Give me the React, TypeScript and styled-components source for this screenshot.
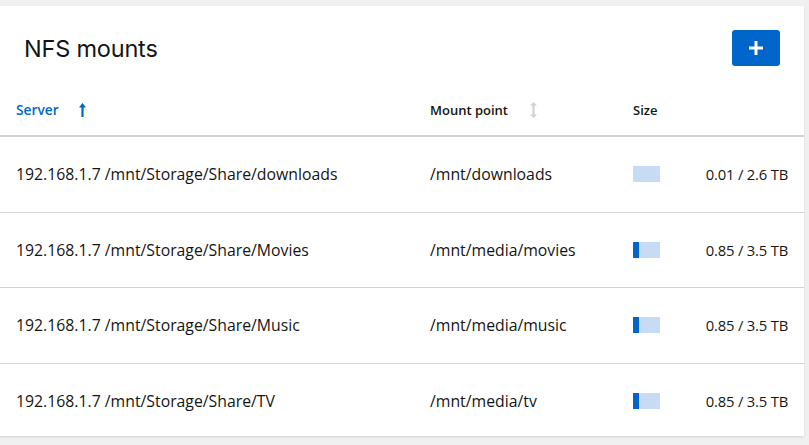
import React from 'react';
import styled, { createGlobalStyle } from 'styled-components';

const GlobalStyle = createGlobalStyle`
  html, body {
    margin: 0;
    padding: 0;
    background: #f0f0f0;
  }
  body {
    font-family: "Open Sans", "Liberation Sans", sans-serif;
    color: #151515;
  }
`;

const Page = styled.div`
  width: 809px;
  height: 445px;
  padding-top: 6px;
  box-sizing: border-box;
  overflow: hidden;
`;

const Card = styled.div`
  width: 804px;
  height: 430px;
  background: #fff;
  box-shadow: 0 1px 2px rgba(3, 3, 3, 0.12);
  overflow: hidden;
`;

const CardHeader = styled.div`
  display: flex;
  align-items: center;
  justify-content: space-between;
  padding: 24px 24px 18px 24px;
  height: 36px;
`;

const Title = styled.h2`
  margin: 0;
  font-family: "Inter", "Open Sans", sans-serif;
  font-size: 23.5px;
  font-weight: 400;
  letter-spacing: -0.2px;
  color: #151515;
`;

const AddButton = styled.button`
  width: 48px;
  height: 36px;
  border: none;
  border-radius: 3px;
  background: #0066cc;
  display: flex;
  align-items: center;
  justify-content: center;
  padding: 0;
  cursor: pointer;
`;

const Row = styled.div<{ $head?: boolean }>`
  display: grid;
  grid-template-columns: 414px 203px 1fr auto;
  align-items: center;
  padding: 0 16px;
  height: ${p => (p.$head ? '51px' : '74.5px')};
  border-bottom: ${p => (p.$head ? '1px solid #d2d2d2' : 'none')};
  & + & {
    border-top: 1px solid #d2d2d2;
  }
`;

const HeadCell = styled.div<{ $active?: boolean }>`
  display: flex;
  align-items: center;
  font-size: ${p => (p.$active ? '13.8px' : '13px')};
  font-weight: 600;
  color: ${p => (p.$active ? '#0066cc' : '#151515')};
`;

const SortIcon = styled.span<{ $offset: number }>`
  display: inline-flex;
  margin-left: ${p => p.$offset}px;
`;

const Cell = styled.div`
  font-size: 15.8px;
  font-weight: 400;
  color: #151515;
  white-space: nowrap;
`;

const SizeCell = styled(Cell)`
  text-align: right;
  font-size: 14.8px;
  letter-spacing: -0.2px;
`;

const Bar = styled.div`
  width: 27px;
  height: 16px;
  background: #c7dcf4;
`;

const BarFill = styled.div`
  height: 100%;
  background: #0066cc;
`;

const PlusIcon = () => (
  <svg width="14" height="14" viewBox="0 0 14 14">
    <rect x="5.5" y="0" width="3" height="14" fill="#fff" />
    <rect x="0" y="5.5" width="14" height="3" fill="#fff" />
  </svg>
);

const ArrowUp = () => (
  <svg width="7" height="14" viewBox="0 0 7 14">
    <path d="M2.4 4.5 V14 H4.6 V4.5 H7 L3.5 0 L0 4.5 Z" fill="#0066cc" />
  </svg>
);

const ArrowsVertical = () => (
  <svg width="7" height="16" viewBox="0 0 7 16">
    <path
      d="M3.5 0 L7 3.6 H4.6 V12.4 H7 L3.5 16 L0 12.4 H2.4 V3.6 H0 Z"
      fill="#d2d2d2"
    />
  </svg>
);

const BAR_WIDTH = 27;

const mounts = [
  { server: '192.168.1.7 /mnt/Storage/Share/downloads', point: '/mnt/downloads', used: 0.01, total: 2.6 },
  { server: '192.168.1.7 /mnt/Storage/Share/Movies', point: '/mnt/media/movies', used: 0.85, total: 3.5 },
  { server: '192.168.1.7 /mnt/Storage/Share/Music', point: '/mnt/media/music', used: 0.85, total: 3.5 },
  { server: '192.168.1.7 /mnt/Storage/Share/TV', point: '/mnt/media/tv', used: 0.85, total: 3.5 },
];

const App = () => {
  return (
    <Page>
      <GlobalStyle />
      <Card>
        <CardHeader>
          <Title>NFS mounts</Title>
          <AddButton aria-label="Add">
            <PlusIcon />
          </AddButton>
        </CardHeader>

        <Row $head>
          <HeadCell $active>
            Server
            <SortIcon $offset={20}>
              <ArrowUp />
            </SortIcon>
          </HeadCell>
          <HeadCell>
            Mount point
            <SortIcon $offset={22}>
              <ArrowsVertical />
            </SortIcon>
          </HeadCell>
          <HeadCell>Size</HeadCell>
          <div />
        </Row>

        {mounts.map(m => (
          <Row key={m.point}>
            <Cell>{m.server}</Cell>
            <Cell>{m.point}</Cell>
            <Bar>
              <BarFill style={{ width: `${Math.floor((m.used / m.total) * BAR_WIDTH)}px` }} />
            </Bar>
            <SizeCell>
              {m.used.toFixed(2)} / {m.total} TB
            </SizeCell>
          </Row>
        ))}
      </Card>
    </Page>
  );
};

export default App;
